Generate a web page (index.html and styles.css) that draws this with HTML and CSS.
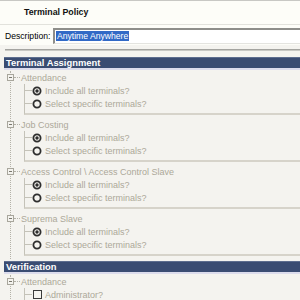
FILE: index.html
```html
<!DOCTYPE html>
<html>
<head>
<meta charset="utf-8">
<link rel="stylesheet" href="styles.css">
</head>
<body>
<div class="header"><span class="title">Terminal Policy</span></div>
<div class="desc-row">
  <span class="desc-label">Description:</span>
  <div class="desc-input"><span class="sel">Anytime Anywhere</span></div>
</div>
<div class="rule"></div>

<div class="section-bar">Terminal Assignment</div>
<div class="tree">
  <div class="group">
    <div class="group-head"><span class="expander"></span><span class="hline"></span><span class="gtext">Attendance</span></div>
    <div class="children">
      <div class="item"><span class="tick"></span><svg class="radio" viewBox="0 0 10 10"><circle cx="5" cy="5" r="3.6" class="ring"/><circle cx="5" cy="5" r="1.7" class="dot"/></svg><span>Include all terminals?</span></div>
      <div class="item"><span class="tick"></span><svg class="radio" viewBox="0 0 10 10"><circle cx="5" cy="5" r="3.6" class="ring"/></svg><span>Select specific terminals?</span></div>
    </div>
  </div>
  <div class="group">
    <div class="group-head"><span class="expander"></span><span class="hline"></span><span class="gtext">Job Costing</span></div>
    <div class="children">
      <div class="item"><span class="tick"></span><svg class="radio" viewBox="0 0 10 10"><circle cx="5" cy="5" r="3.6" class="ring"/><circle cx="5" cy="5" r="1.7" class="dot"/></svg><span>Include all terminals?</span></div>
      <div class="item"><span class="tick"></span><svg class="radio" viewBox="0 0 10 10"><circle cx="5" cy="5" r="3.6" class="ring"/></svg><span>Select specific terminals?</span></div>
    </div>
  </div>
  <div class="group">
    <div class="group-head"><span class="expander"></span><span class="hline"></span><span class="gtext">Access Control \ Access Control Slave</span></div>
    <div class="children">
      <div class="item"><span class="tick"></span><svg class="radio" viewBox="0 0 10 10"><circle cx="5" cy="5" r="3.6" class="ring"/><circle cx="5" cy="5" r="1.7" class="dot"/></svg><span>Include all terminals?</span></div>
      <div class="item"><span class="tick"></span><svg class="radio" viewBox="0 0 10 10"><circle cx="5" cy="5" r="3.6" class="ring"/></svg><span>Select specific terminals?</span></div>
    </div>
  </div>
  <div class="group">
    <div class="group-head"><span class="expander"></span><span class="hline"></span><span class="gtext">Suprema Slave</span></div>
    <div class="children">
      <div class="item"><span class="tick"></span><svg class="radio" viewBox="0 0 10 10"><circle cx="5" cy="5" r="3.6" class="ring"/><circle cx="5" cy="5" r="1.7" class="dot"/></svg><span>Include all terminals?</span></div>
      <div class="item"><span class="tick"></span><svg class="radio" viewBox="0 0 10 10"><circle cx="5" cy="5" r="3.6" class="ring"/></svg><span>Select specific terminals?</span></div>
    </div>
  </div>
</div>

<div class="section-bar section-next">Verification</div>
<div class="tree">
  <div class="group">
    <div class="group-head"><span class="expander"></span><span class="hline"></span><span class="gtext">Attendance</span></div>
    <div class="children">
      <div class="item"><span class="tick"></span><span class="check"></span><span>Administrator?</span></div>
    </div>
  </div>
</div>
</body>
</html>
```

FILE: styles.css
```css
html, body {
  margin: 0;
  padding: 0;
}
body {
  width: 300px;
  height: 300px;
  overflow: hidden;
  background: #f4f3ef;
  font-family: "Liberation Sans", Arial, sans-serif;
  font-size: 9px;
  color: #000;
}
.header {
  box-sizing: border-box;
  height: 25px;
  background: #fdfdf8;
  border-top: 1px solid #c8c8c4;
  border-bottom: 1px solid #e2e2dc;
  padding: 5px 0 0 24px;
  line-height: 13px;
}
.title {
  font-weight: bold;
  font-size: 8.8px;
  color: #111;
}
.desc-row {
  display: flex;
  align-items: center;
  background: #fdfdf8;
  padding-top: 3px;
  padding-bottom: 1px;
}
.desc-label {
  width: 48px;
  padding-left: 5px;
  font-size: 8.6px;
  line-height: 12px;
}
.desc-input {
  flex: 1;
  box-sizing: border-box;
  height: 16px;
  background: #fff;
  border-top: 2px solid #8e8e8a;
  border-left: 2px solid #8e8e8a;
  border-bottom: 1px solid #e4e4e0;
  padding: 1px 0 0 1px;
  line-height: 11px;
}
.sel {
  background: #3169c6;
  color: #fff;
  font-size: 8.6px;
  padding: 0 1px;
}
.rule {
  margin: 4px 0 6px 5px;
  border-top: 1px solid #a4a4a0;
  border-bottom: 1px solid #c8c8c4;
}
.section-bar {
  box-sizing: border-box;
  margin-left: 4px;
  height: 13px;
  background: #3a4c72;
  border-top: 1px solid #5d6d8e;
  border-bottom: 2px solid #dcdcec;
  color: #fff;
  font-weight: bold;
  font-size: 9.4px;
  line-height: 10px;
  padding-left: 2px;
}
.section-next {
  margin-top: 2px;
}
.tree {
  margin: 1px 0 0 10px;
  border-left: 1px dotted #b4b2a8;
}
.group {
  padding-bottom: 3px;
}
.group-head {
  display: flex;
  align-items: center;
  height: 13px;
  color: #aca899;
}
.expander {
  box-sizing: border-box;
  width: 7px;
  height: 7px;
  margin-left: -4px;
  border: 1px solid #a8a69c;
  background: #f4f3ef linear-gradient(#7a786e, #7a786e) no-repeat center / 3px 1px;
}
.hline {
  width: 6px;
  border-top: 1px dotted #b4b2a8;
}
.gtext {
  padding-left: 1px;
  white-space: nowrap;
}
.children {
  margin-left: 13px;
  border-left: 1px solid #c4c2b8;
  border-bottom: 2px solid #d6d3ca;
  padding-bottom: 3px;
}
.item {
  display: flex;
  align-items: center;
  height: 13px;
  color: #aca899;
  white-space: nowrap;
}
.tick {
  width: 7px;
  border-top: 1px solid #c4c2b8;
}
.radio {
  width: 10px;
  height: 10px;
  margin-right: 3px;
}
.ring {
  fill: #f4f3ef;
  stroke: #2e2e2e;
  stroke-width: 1.8;
}
.dot {
  fill: #2e2e2e;
}
.check {
  box-sizing: border-box;
  width: 9px;
  height: 9px;
  margin: 0 3px 0 1px;
  border: 1.5px solid #3a3a3a;
  background: #f4f3ef;
}
```
